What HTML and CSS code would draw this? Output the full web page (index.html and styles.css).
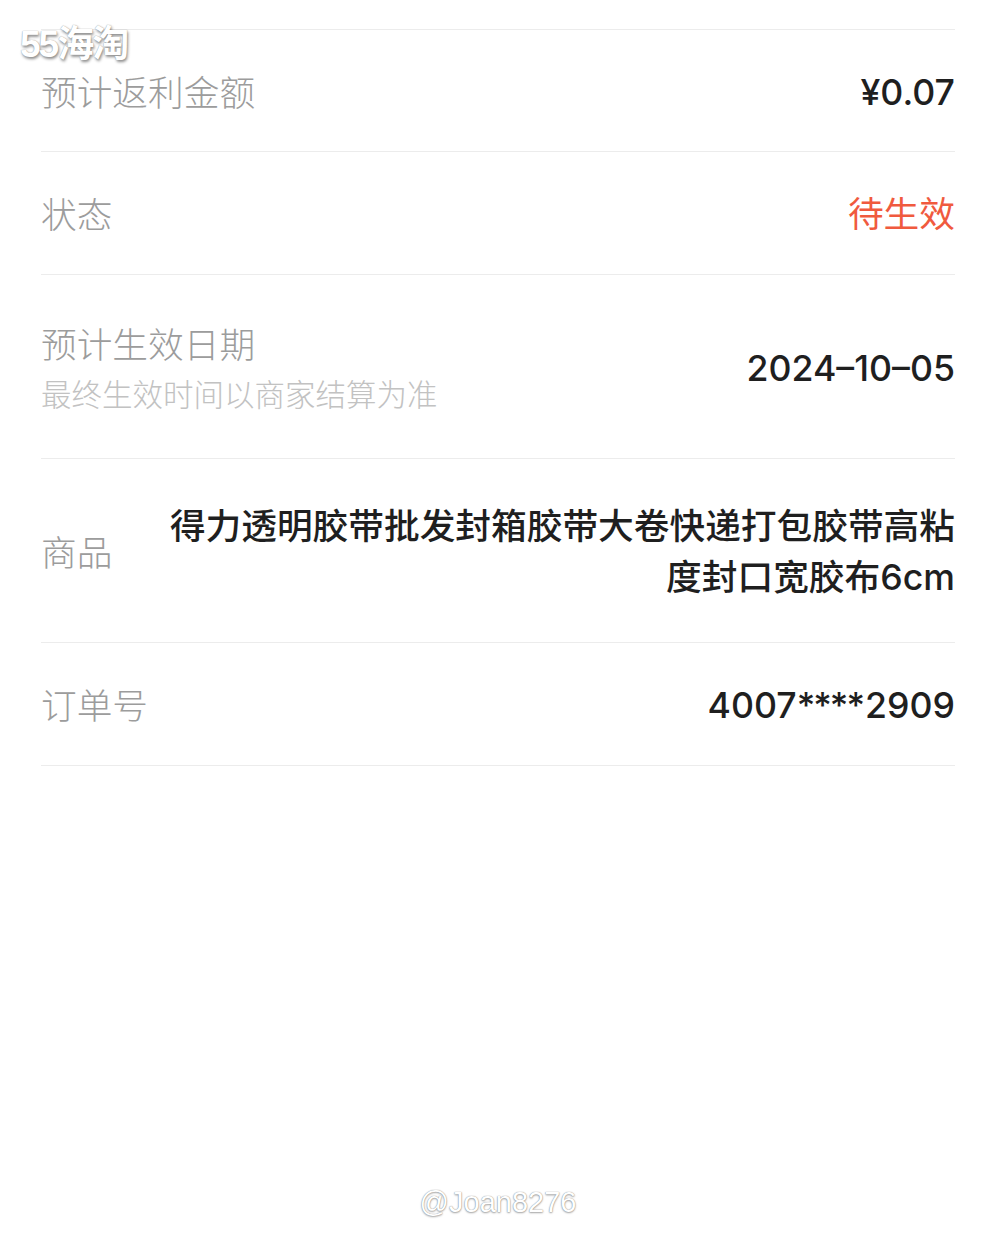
FILE: index.html
```html
<!DOCTYPE html>
<html lang="zh-CN">
	<head>
		<meta charset="UTF-8" />
		<title>订单详情</title>
		<link rel="stylesheet" href="styles.css">
	</head>
	<body>
		<div class="page">
			<div class="list">
				<div class="row h1">
					<div class="label">预计返利金额</div>
					<div class="value">¥0.07</div>
				</div>
				<div class="row h1">
					<div class="label">状态</div>
					<div class="value red">待生效</div>
				</div>
				<div class="row h2">
					<div class="label">
						预计生效日期
						<div class="sub">最终生效时间以商家结算为准</div>
					</div>
					<div class="value">2024–10–05</div>
				</div>
				<div class="row h2">
					<div class="label">商品</div>
					<div class="value goods">得力透明胶带批发封箱胶带大卷快递打包胶带高粘度封口宽胶布6cm</div>
				</div>
				<div class="row h1">
					<div class="label">订单号</div>
					<div class="value">4007<span class="stars">****</span>2909</div>
				</div>
			</div>
		</div>
		<div class="mark-top">55海淘</div>
		<div class="mark-bottom">@Joan8276</div>
	</body>
</html>
```

FILE: styles.css
```css
body{
	margin: 0;
	background: #fff;
	font-family: "Noto Sans CJK SC", "Noto Sans", sans-serif;
	color: #222;
	width: 996px;
	height: 1246px;
	position: relative;
	overflow: hidden;
}
div.page{
	padding: 29px 41px 0;
}
div.list{
	border-top: 1px solid #ececec;
}
div.row{
	display: flex;
	align-items: center;
	justify-content: space-between;
	border-bottom: 1px solid #ececec;
	box-sizing: border-box;
}
div.row.h1{
	height: 123px;
}
div.row.h1:first-child{
	height: 122px;
}
div.row.h2{
	height: 184px;
}
div.label{
	font-size: 35.7px;
	line-height: 1.4;
	color: #9c9c9c;
	font-weight: 300;
	white-space: nowrap;
	flex-shrink: 0;
}
div.label div.sub{
	font-size: 30.5px;
	color: #c2c2c2;
	line-height: 1.4;
	margin-top: 4px;
}
div.value{
	font-family: Inter, "Noto Sans CJK SC", sans-serif;
	font-size: 35.7px;
	line-height: 51px;
	font-weight: 500;
	text-align: right;
	color: #1f1f1f;
	padding-top: 3px;
}
div.value span.stars{
	letter-spacing: -2px;
	margin-right: 2px;
}
div.value.red{
	color: #f05a3e;
	font-weight: 400;
}
div.value.goods{
	width: 790px;
	padding-top: 3px;
}
div.mark-top{
	position: absolute;
	left: 20px;
	top: 14px;
	font-family: "Liberation Sans", "Noto Sans CJK SC", sans-serif;
	font-size: 37px;
	font-weight: 700;
	letter-spacing: -2px;
	color: #fff;
	text-shadow: 0 0 1px #888, 1px 2px 3px rgba(0,0,0,0.45);
}
div.mark-bottom{
	position: absolute;
	left: 0;
	right: 0;
	top: 1186px;
	text-align: center;
	font-family: "Liberation Sans", sans-serif;
	font-size: 29px;
	color: #fff;
	text-shadow: 0 0 1px #777, 0 1px 2px rgba(0,0,0,0.35);
}
```
